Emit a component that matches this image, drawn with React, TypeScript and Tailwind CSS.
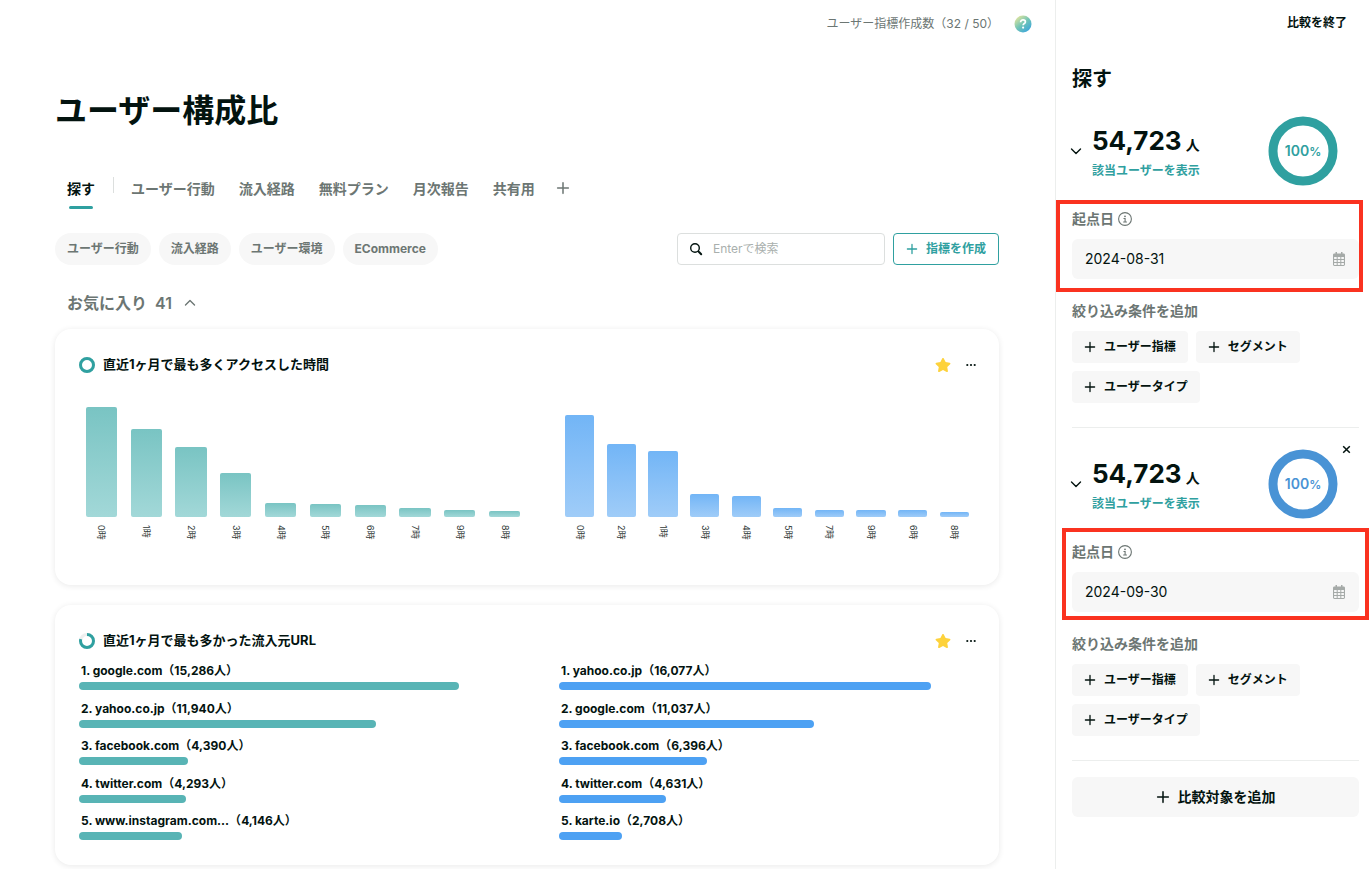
import { useState } from 'react';
import { FaStar } from 'react-icons/fa';

const tabs = ['ユーザー行動', '流入経路', '無料プラン', '月次報告', '共有用'];
const categories = ['ユーザー行動', '流入経路', 'ユーザー環境', 'ECommerce'];
const conditions = ['ユーザー指標', 'セグメント', 'ユーザータイプ'];

type Bar = { label: string; value: number };
type Source = { name: string; users: number };
type Tone = 'teal' | 'blue';

// Bar values are percentages of the chart height
const hoursTeal: Bar[] = [
  { label: '0時', value: 100 },
  { label: '1時', value: 80 },
  { label: '2時', value: 64 },
  { label: '3時', value: 40 },
  { label: '4時', value: 13 },
  { label: '5時', value: 11.6 },
  { label: '6時', value: 11 },
  { label: '7時', value: 8.2 },
  { label: '9時', value: 6.6 },
  { label: '8時', value: 5.4 },
];

const hoursBlue: Bar[] = [
  { label: '0時', value: 92.5 },
  { label: '2時', value: 66 },
  { label: '1時', value: 60 },
  { label: '3時', value: 20.6 },
  { label: '4時', value: 19.2 },
  { label: '5時', value: 8.4 },
  { label: '7時', value: 6.2 },
  { label: '9時', value: 6.1 },
  { label: '6時', value: 6.1 },
  { label: '8時', value: 5 },
];

const sourcesTeal: Source[] = [
  { name: 'google.com', users: 15286 },
  { name: 'yahoo.co.jp', users: 11940 },
  { name: 'facebook.com', users: 4390 },
  { name: 'twitter.com', users: 4293 },
  { name: 'www.instagram.com...', users: 4146 },
];

const sourcesBlue: Source[] = [
  { name: 'yahoo.co.jp', users: 16077 },
  { name: 'google.com', users: 11037 },
  { name: 'facebook.com', users: 6396 },
  { name: 'twitter.com', users: 4631 },
  { name: 'karte.io', users: 2708 },
];

const MAX_USERS = 18000;

const PlusIcon = ({ size = 12 }: { size?: number }) => (
  <svg width={size} height={size} viewBox="0 0 12 12" fill="none" stroke="currentColor" strokeWidth="1.3" strokeLinecap="round" aria-hidden="true">
    <path d="M6 1.4v9.2M1.4 6h9.2" />
  </svg>
);

const ChevronIcon = ({ up = false }: { up?: boolean }) => (
  <svg width="12" height="12" viewBox="0 0 12 12" fill="none" stroke="currentColor" strokeWidth="1.4" strokeLinecap="round" strokeLinejoin="round" aria-hidden="true">
    <path d={up ? 'M1.5 8.1L6 3.6l4.5 4.5' : 'M1.5 3.9L6 8.4l4.5-4.5'} />
  </svg>
);

const SearchIcon = () => (
  <svg width="14" height="14" viewBox="0 0 14 14" fill="none" stroke="currentColor" strokeLinecap="round" aria-hidden="true">
    <circle cx="6" cy="6" r="4.3" strokeWidth="1.4" />
    <path d="M9.2 9.2l1 1" strokeWidth="1.4" />
    <path d="M10.3 10.3l1.9 1.9" strokeWidth="2" />
  </svg>
);

const InfoIcon = () => (
  <svg width="14" height="14" viewBox="0 0 14 14" fill="none" stroke="currentColor" aria-hidden="true">
    <circle cx="7" cy="7" r="6.4" strokeWidth="1.1" />
    <circle cx="7" cy="4.3" r="0.9" fill="currentColor" stroke="none" />
    <path d="M5.5 6.5h1.6v3.4M5.2 10h3.7" strokeWidth="1.1" />
  </svg>
);

const CalendarIcon = () => (
  <svg width="14" height="14" viewBox="0 0 14 14" fill="#a5aaa8" aria-hidden="true">
    <path d="M3.5 0h1.5v3H3.5zM9 0h1.5v3H9z" />
    <path
      fillRule="evenodd"
      d="M2.4 1.6h9.2c.8 0 1.4.6 1.4 1.4v9.6c0 .8-.6 1.4-1.4 1.4H2.4C1.6 14 1 13.4 1 12.6V3c0-.8.6-1.4 1.4-1.4zM2.1 5v2h2.6V5zM5.7 5v2h2.6V5zM9.3 5v2h2.6V5zM2.1 8v2h2.6V8zM5.7 8v2h2.6V8zM9.3 8v2h2.6V8zM2.1 11v1.9h2.6V11zM5.7 11v1.9h2.6V11zM9.3 11v1.9h2.6V11z"
    />
  </svg>
);

const HelpIcon = () => (
  <svg width="18" height="18" viewBox="0 0 18 18" aria-hidden="true">
    <defs>
      <linearGradient id="help" x1="0.15" y1="0.1" x2="0.8" y2="0.9">
        <stop offset="0" stopColor="#dbe3a0" />
        <stop offset="0.5" stopColor="#72c5b6" />
        <stop offset="1" stopColor="#41a8d8" />
      </linearGradient>
    </defs>
    <circle cx="9" cy="9" r="8.5" fill="url(#help)" />
    <path d="M6.6 7.2c0-1.4 1-2.3 2.4-2.3s2.4.8 2.4 2c0 1.6-2.3 1.7-2.3 3.3" fill="none" stroke="#fff" strokeWidth="1.7" />
    <circle cx="9.1" cy="12.6" r="1.1" fill="#fff" />
  </svg>
);

const RingIcon = ({ percent }: { percent: number }) => (
  <svg width="16" height="16" viewBox="0 0 16 16" fill="none" strokeWidth="3" aria-hidden="true">
    <circle cx="8" cy="8" r="6.5" stroke="#eeefef" />
    <circle cx="8" cy="8" r="6.5" stroke="#2fa0a0" pathLength="100" strokeDasharray={`${percent} 100`} transform="rotate(-90 8 8)" />
  </svg>
);

const ColumnChart = ({ data, tone }: { data: Bar[]; tone: Tone }) => (
  <div className="flex">
    {data.map((bar) => (
      <div key={bar.label} className="flex flex-1 flex-col items-center">
        <div className="flex h-[110px] w-full items-end justify-center">
          <div
            className={`w-7/10 rounded-xs bg-linear-to-b ${
              tone === 'teal' ? 'from-[#79c4c3] to-[#a2d8d8]' : 'from-[#72b5f6] to-[#9fccf8]'
            }`}
            style={{ height: `${bar.value}%` }}
          />
        </div>
        <span className="mt-2 text-[9px] leading-3 text-[#2f3a37] [text-orientation:sideways] [writing-mode:vertical-rl]">
          {bar.label}
        </span>
      </div>
    ))}
  </div>
);

const SourceList = ({ data, tone }: { data: Source[]; tone: Tone }) => (
  <ol className="flex h-[180px] flex-col justify-between">
    {data.map((source, i) => (
      <li key={source.name}>
        <p className="pl-0.5 text-xs leading-[22px] font-bold">
          {i + 1}. {source.name}（{source.users.toLocaleString('en-US')}人）
        </p>
        <div
          className={`h-2 rounded-full ${tone === 'teal' ? 'bg-[#58b4b5]' : 'bg-[#4da1f3]'}`}
          style={{ width: `${(source.users / MAX_USERS) * 100}%` }}
        />
      </li>
    ))}
  </ol>
);

type CardProps = {
  title: string;
  percent: number;
  className: string;
  left: React.ReactNode;
  right: React.ReactNode;
};

const MetricCard = ({ title, percent, className, left, right }: CardProps) => (
  <section className={`rounded-2xl bg-white px-6 pt-6 shadow-[0_1px_6px_rgba(0,0,0,0.09)] ${className}`}>
    <div className="flex h-6 items-center justify-between">
      <div className="flex items-center gap-2">
        <RingIcon percent={percent} />
        <h2 className="text-[13px] font-bold">{title}</h2>
      </div>
      <div className="-mr-1 flex items-center gap-3">
        <button aria-label="お気に入り" className="text-[#fdd23c]">
          <FaStar size={16} />
        </button>
        <button aria-label="メニュー" className="flex w-4 justify-center">
          <svg width="12" height="4" viewBox="0 0 12 4" fill="currentColor" aria-hidden="true">
            <circle cx="2.3" cy="2" r="1.1" />
            <circle cx="6" cy="2" r="1.1" />
            <circle cx="9.7" cy="2" r="1.1" />
          </svg>
        </button>
      </div>
    </div>
    <div className="flex">
      <div className="w-1/2">{left}</div>
      <div className="w-1/2 pl-8">{right}</div>
    </div>
  </section>
);

type SegmentProps = {
  id: string;
  date: string;
  tone: Tone;
  frame: string;
  removable?: boolean;
};

const Segment = ({ id, date, tone, frame, removable = false }: SegmentProps) => (
  <section className="border-b border-[#eceeed] pb-6">
    <div className="relative flex h-[90px] items-center justify-between pr-[21px]">
      <div className="flex items-center gap-2">
        <button aria-label="開閉" className="-ml-0.5">
          <ChevronIcon />
        </button>
        <div className="pt-1 pl-0.5">
          <p className="flex items-baseline gap-1 leading-8 font-bold">
            <span className="text-[26px]">54,723</span>
            <span className="text-sm">人</span>
          </p>
          <a href="#users" className="mt-1 block text-xs leading-5 font-bold text-[#2fa0a0]">
            該当ユーザーを表示
          </a>
        </div>
      </div>
      <div className={`grid size-[70px] place-items-center ${tone === 'teal' ? 'text-[#2fa0a0]' : 'text-[#4993d5]'}`}>
        <svg className="col-start-1 row-start-1" width="70" height="70" viewBox="0 0 70 70" fill="none" stroke="currentColor" aria-hidden="true">
          <circle cx="35" cy="35" r="30" strokeWidth="9" />
        </svg>
        <p className="col-start-1 row-start-1 text-sm font-semibold">
          100<span className="text-xs">%</span>
        </p>
      </div>
      {removable && (
        <button aria-label="削除" className="absolute top-1.5 right-2">
          <svg width="9" height="9" viewBox="0 0 9 9" stroke="currentColor" strokeWidth="1.5" aria-hidden="true">
            <path d="M1.2 1.2l6.6 6.6M7.8 1.2L1.2 7.8" />
          </svg>
        </button>
      )}
    </div>

    <div className="relative pt-[13px]">
      <div className="flex h-5 items-center gap-1 text-[#6c7673]">
        <label htmlFor={id} className="text-sm font-semibold">起点日</label>
        <InfoIcon />
      </div>
      <div className="mt-2.5 flex h-10 items-center rounded-md bg-[#f7f7f7] px-[13px]">
        <input id={id} type="text" defaultValue={date} className="min-w-0 flex-1 bg-transparent text-sm outline-none" />
        <CalendarIcon />
      </div>
      <div className={`pointer-events-none absolute h-[92px] border-4 border-[#fa3220] ${frame}`} />
    </div>

    <p className="pt-[22px] text-sm leading-5 font-semibold text-[#6c7673]">絞り込み条件を追加</p>
    <div className="mt-2.5 flex flex-wrap gap-2">
      {conditions.map((name) => (
        <button key={name} className="flex h-8 items-center gap-2 rounded bg-[#f7f7f7] px-3 text-xs font-bold">
          <PlusIcon />
          {name}
        </button>
      ))}
    </div>
  </section>
);

const App = () => {
  const [open, setOpen] = useState(true);

  return (
    <div className="flex min-h-screen bg-white font-['Inter','Noto_Sans_CJK_JP',sans-serif] text-[#03130f]">
      <main className="min-w-0 flex-1 pr-14 pb-1 pl-[55px]">
        {/* Top bar */}
        <div className="-mr-[33px] flex h-12 items-center justify-end gap-[15px] text-xs text-[#6c7673]">
          <span>ユーザー指標作成数（32 / 50）</span>
          <button aria-label="ヘルプ"><HelpIcon /></button>
        </div>

        <h1 className="mt-[39px] text-[32px] leading-[48px] font-bold">ユーザー構成比</h1>

        {/* Tabs */}
        <nav className="mt-[39px] flex h-10 items-start text-sm leading-[30px] font-semibold text-[#6c7673]">
          <button className="flex flex-col items-center px-3 text-[#03130f]">
            探す
            <span className="mt-0.5 h-[3px] w-6 rounded-full bg-[#2fa0a0]" />
          </button>
          <span className="mt-[3px] mr-[5px] ml-1.5 h-4 w-px bg-[#dcdfde]" />
          {tabs.map((tab) => (
            <button key={tab} className="px-3">{tab}</button>
          ))}
          <button aria-label="タブを追加" className="flex h-7 items-center px-[9px]">
            <PlusIcon size={14} />
          </button>
        </nav>

        {/* Category filters and search */}
        <div className="mt-[19px] flex items-center justify-between">
          <div className="flex gap-2">
            {categories.map((name) => (
              <button key={name} className="h-8 rounded-full bg-[#f7f7f7] px-3 text-xs font-bold text-[#6c7673]">
                {name}
              </button>
            ))}
          </div>
          <div className="flex gap-2">
            <div className="flex h-8 w-52 items-center gap-2 rounded border border-[#dcdfde] px-[11px]">
              <SearchIcon />
              <input
                type="search"
                aria-label="検索"
                placeholder="Enterで検索"
                className="min-w-0 flex-1 pl-0.5 text-xs outline-none placeholder:text-[#a9afad]"
              />
            </div>
            <button className="flex h-8 items-center gap-2 rounded border border-[#2fa0a0] px-3 text-xs font-bold text-[#2fa0a0]">
              <PlusIcon />
              指標を作成
            </button>
          </div>
        </div>

        <button
          onClick={() => setOpen(!open)}
          className="mt-[26px] flex h-6 items-center gap-2 pl-3 font-semibold text-[#6c7673]"
        >
          <span>お気に入り</span>
          <span>41</span>
          <span className="pl-1"><ChevronIcon up={open} /></span>
        </button>

        {open && (
          <div className="mt-3.5 flex flex-col gap-5">
            <MetricCard
              title="直近1ヶ月で最も多くアクセスした時間"
              percent={100}
              className="h-64"
              left={<div className="pt-[30px]"><ColumnChart data={hoursTeal} tone="teal" /></div>}
              right={<div className="pt-[30px]"><ColumnChart data={hoursBlue} tone="blue" /></div>}
            />
            <MetricCard
              title="直近1ヶ月で最も多かった流入元URL"
              percent={80}
              className="h-[260px]"
              left={<div className="pt-[7px]"><SourceList data={sourcesTeal} tone="teal" /></div>}
              right={<div className="pt-[7px]"><SourceList data={sourcesBlue} tone="blue" /></div>}
            />
          </div>
        )}
      </main>

      {/* Comparison panel */}
      <aside className="w-[316px] shrink-0 border-l border-[#eceeed] pr-3 pl-4">
        <div className="flex h-[46px] items-center justify-end pr-3">
          <button className="text-xs font-bold">比較を終了</button>
        </div>
        <h2 className="mt-[19px] mb-[13px] text-xl leading-7 font-bold">探す</h2>

        <Segment id="base-date-1" date="2024-08-31" tone="teal" frame="top-1 -left-4 -right-1" />
        <div className="pt-[11px]">
          <Segment id="base-date-2" date="2024-09-30" tone="blue" frame="-top-px -left-2.5 -right-2.5" removable />
        </div>

        <button className="mt-4 flex h-10 w-full items-center justify-center gap-2 rounded-md bg-[#f7f7f7] text-sm font-bold">
          <PlusIcon size={14} />
          比較対象を追加
        </button>
      </aside>
    </div>
  );
};

export default App;
